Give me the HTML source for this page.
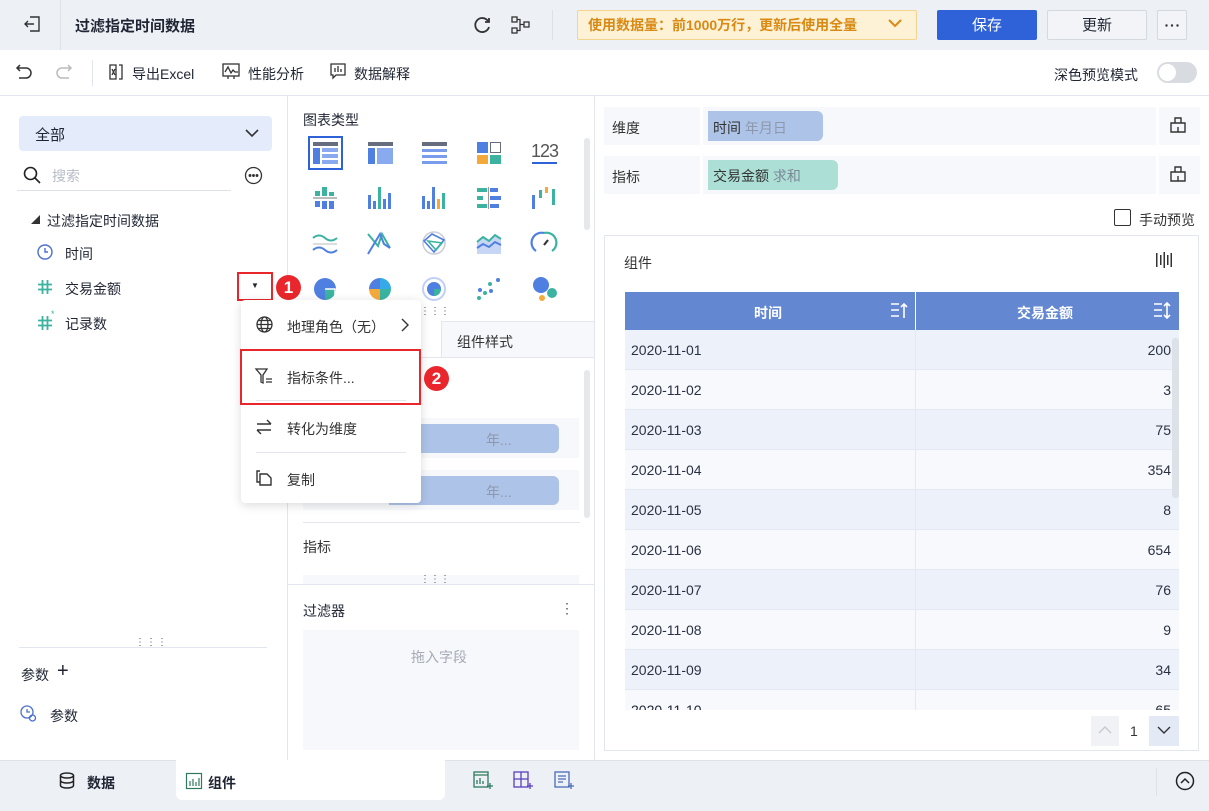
<!DOCTYPE html>
<html><head><meta charset="utf-8"><style>
*{box-sizing:border-box;margin:0;padding:0}
body{width:1209px;height:811px;overflow:hidden;position:relative;background:#fff;font-family:"Liberation Sans","Noto Sans CJK SC",sans-serif;font-size:14px;color:#1f2533}
.a{position:absolute}
.t{position:absolute;white-space:nowrap}
svg{position:absolute;overflow:visible}
.row{position:absolute;left:625px;width:554px;height:40px;border-bottom:1px solid #e4e8f0}
.row span{position:absolute;top:12px;font-size:14px;color:#2a3142}
</style></head><body>
<!-- top bar -->
<div class="a" style="left:0;top:0;width:1209px;height:50px;background:#edf0f5"></div>
<div class="a" style="left:60px;top:0;width:1px;height:50px;background:#dde1e8"></div>
<svg style="left:22px;top:14px" width="20" height="20" viewBox="0 0 20 20" fill="none" stroke="#333" stroke-width="1.4"><path d="M8 3h9v14H8M3 10h9M6 7l-3 3 3 3"/></svg>
<div class="t" style="left:75px;top:15px;font-size:15px;font-weight:bold">过滤指定时间数据</div>
<svg style="left:472px;top:15px" width="20" height="20" viewBox="0 0 20 20" fill="none" stroke="#333" stroke-width="1.8"><path d="M16 6a7 7 0 1 0 1 6"/><path d="M17 3v4h-4"/></svg>
<svg style="left:511px;top:16px" width="20" height="18" viewBox="0 0 20 18" fill="none" stroke="#333" stroke-width="1.3"><rect x="1" y="1" width="5" height="5"/><rect x="1" y="12" width="5" height="5"/><rect x="13" y="6" width="5" height="5"/><path d="M6 3.5h3v11H6M9 8.5h4"/></svg>
<div class="a" style="left:552px;top:10px;width:1px;height:30px;background:#dde1e8"></div>
<div class="a" style="left:577px;top:10px;width:340px;height:30px;background:#fdf1d6;border:1px solid #f5d58e;border-radius:2px"></div>
<div class="t" style="left:588px;top:15px;color:#d98a14;font-size:14px;font-weight:bold">使用数据量：前1000万行，更新后使用全量</div>
<svg style="left:888px;top:18px" width="14" height="10" viewBox="0 0 14 10" fill="none" stroke="#d98a14" stroke-width="2"><path d="M1 2l6 6 6-6"/></svg>
<div class="a" style="left:937px;top:10px;width:100px;height:30px;background:#2f62d8;border-radius:2px"></div>
<div class="t" style="left:972px;top:14px;color:#fff;font-size:15px">保存</div>
<div class="a" style="left:1047px;top:10px;width:100px;height:30px;background:#f2f4f7;border:1px solid #d4d8df;border-radius:2px"></div>
<div class="t" style="left:1082px;top:14px;font-size:15px">更新</div>
<div class="a" style="left:1157px;top:10px;width:30px;height:30px;background:#f2f4f7;border:1px solid #d4d8df;border-radius:2px"></div>
<svg style="left:1165px;top:24px" width="14" height="3" fill="#333"><circle cx="1.5" cy="1.5" r="1.2"/><circle cx="7" cy="1.5" r="1.2"/><circle cx="12.5" cy="1.5" r="1.2"/></svg>
<!-- toolbar -->
<div class="a" style="left:0;top:95px;width:1209px;height:1px;background:#e3e6ec"></div>
<svg style="left:15px;top:63px" width="18" height="16" viewBox="0 0 18 16" fill="none" stroke="#333" stroke-width="1.5"><path d="M5 2L2 5l3 3M2 5h9a5 5 0 0 1 0 10H4"/></svg>
<svg style="left:55px;top:63px" width="18" height="16" viewBox="0 0 18 16" fill="none" stroke="#bbb" stroke-width="1.5"><path d="M13 2l3 3-3 3M16 5H7a5 5 0 0 0 0 10h7"/></svg>
<div class="a" style="left:92px;top:60px;width:1px;height:26px;background:#e3e6ec"></div>
<svg style="left:108px;top:64px" width="16" height="16" viewBox="0 0 16 16" fill="none" stroke="#333" stroke-width="1.3"><path d="M2 1h6v14H2zM11 1h3v14h-3M4 5l3 6M7 5l-3 6"/></svg>
<div class="t" style="left:132px;top:64px">导出Excel</div>
<svg style="left:222px;top:63px" width="18" height="17" viewBox="0 0 18 17" fill="none" stroke="#333" stroke-width="1.3"><rect x="1" y="1" width="16" height="12"/><path d="M3 9l3-5 3 6 2-3 2 2h3M6 13v3M12 13v3"/></svg>
<div class="t" style="left:248px;top:64px">性能分析</div>
<svg style="left:330px;top:63px" width="16" height="17" viewBox="0 0 16 17" fill="none" stroke="#333" stroke-width="1.3"><path d="M1 1h14v11H6l-3 3v-3H1z M5 5v4M8 3v6M11 6v3"/></svg>
<div class="t" style="left:354px;top:64px">数据解释</div>
<div class="t" style="left:1054px;top:65px">深色预览模式</div>
<div class="a" style="left:1157px;top:62px;width:40px;height:21px;background:#d8dbe0;border-radius:11px"></div>
<div class="a" style="left:1159px;top:64px;width:17px;height:17px;background:#fff;border-radius:50%"></div>
<!-- left panel -->
<div class="a" style="left:287px;top:96px;width:1px;height:664px;background:#e3e6ec"></div>
<div class="a" style="left:19px;top:116px;width:253px;height:35px;background:#e4ecfb;border-radius:4px"></div>
<div class="t" style="left:35px;top:124px;font-size:15px">全部</div>
<svg style="left:245px;top:129px" width="14" height="9" viewBox="0 0 14 9" fill="none" stroke="#333" stroke-width="1.6"><path d="M1 1l6 6 6-6"/></svg>
<svg style="left:23px;top:166px" width="18" height="18" viewBox="0 0 18 18" fill="none" stroke="#222" stroke-width="1.6"><circle cx="7.5" cy="7.5" r="6"/><path d="M12 12l5 5"/></svg>
<div class="t" style="left:52px;top:166px;color:#b7bcc6">搜索</div>
<div class="a" style="left:17px;top:190px;width:214px;height:1px;background:#dfe2e8"></div>
<svg style="left:244px;top:166px" width="19" height="19" viewBox="0 0 19 19" fill="none" stroke="#333" stroke-width="1.3"><circle cx="9.5" cy="9.5" r="8"/><circle cx="6" cy="9.5" r=".8" fill="#333"/><circle cx="9.5" cy="9.5" r=".8" fill="#333"/><circle cx="13" cy="9.5" r=".8" fill="#333"/></svg>
<div class="t" style="left:31px;top:213px;font-size:9px;color:#333">◢</div>
<div class="t" style="left:47px;top:211px">过滤指定时间数据</div>
<svg style="left:37px;top:244px" width="16" height="16" viewBox="0 0 16 16" fill="none" stroke="#4d6fd0" stroke-width="1.4"><circle cx="8" cy="8" r="7"/><path d="M8 4v4h3"/></svg>
<div class="t" style="left:65px;top:244px">时间</div>
<svg style="left:38px;top:280px" width="14" height="14" fill="none" stroke="#3cb3a1" stroke-width="1.8"><path d="M4.5 0v14M9.5 0v14M0 4.5h14M0 9.5h14"/></svg>
<div class="t" style="left:65px;top:279px">交易金额</div>
<svg style="left:38px;top:316px" width="14" height="14" fill="none" stroke="#3cb3a1" stroke-width="1.8"><path d="M4.5 0v14M9.5 0v14M0 4.5h14M0 9.5h14"/></svg>
<div class="t" style="left:51px;top:309px;font-size:9px;color:#3cb3a1">*</div>
<div class="t" style="left:65px;top:314px">记录数</div>
<div class="a" style="left:237px;top:272px;width:36px;height:29px;border:2px solid #e8262b"></div>
<div class="t" style="left:251px;top:281px;font-size:8px">▼</div>
<div class="a" style="left:276px;top:275px;width:25px;height:25px;background:#e8262b;border-radius:50%;color:#fff;font-weight:bold;font-size:17px;text-align:center;line-height:25px">1</div>
<div class="t" style="left:135px;top:637px;font-size:10px;color:#555;letter-spacing:1px">⋮⋮⋮</div>
<div class="a" style="left:19px;top:647px;width:248px;height:1px;background:#e3e6ec"></div>
<div class="t" style="left:21px;top:665px">参数</div>
<div class="t" style="left:57px;top:660px;font-size:20px">+</div>
<svg style="left:20px;top:705px" width="18" height="18" viewBox="0 0 18 18" fill="none" stroke="#4d6fd0" stroke-width="1.3"><circle cx="7" cy="7" r="6"/><path d="M7 4v3h3"/><circle cx="12.5" cy="13" r="3"/></svg>
<div class="t" style="left:50px;top:706px">参数</div>
<!-- middle panel -->
<div class="a" style="left:594px;top:96px;width:1px;height:664px;background:#e3e6ec"></div>
<div class="t" style="left:303px;top:110px">图表类型</div>
<div class="a" style="left:584px;top:138px;width:6px;height:92px;background:#e6e8ec;border-radius:3px"></div>
<div class="a" style="left:308px;top:136px;width:35px;height:34px;border:2px solid #2f62d8"></div>
<svg style="left:313px;top:142px" width="25" height="22"><rect x="0" y="0" width="25" height="4" fill="#666d7e"/><rect x="0" y="6" width="7" height="16" fill="#4f7fe0"/><rect x="9" y="6" width="16" height="4" fill="#8aaaf0"/><rect x="9" y="12" width="16" height="4" fill="#8aaaf0"/><rect x="9" y="18" width="16" height="4" fill="#8aaaf0"/></svg>
<svg style="left:368px;top:142px" width="25" height="22"><rect x="0" y="0" width="25" height="4" fill="#666d7e"/><rect x="0" y="6" width="7" height="16" fill="#4f7fe0"/><rect x="9" y="6" width="16" height="16" fill="#8aaaf0"/></svg>
<svg style="left:422px;top:142px" width="25" height="22"><rect x="0" y="0" width="25" height="4" fill="#666d7e"/><rect x="0" y="7" width="25" height="3" fill="#7a9cec"/><rect x="0" y="13" width="25" height="3" fill="#7a9cec"/><rect x="0" y="19" width="25" height="3" fill="#7a9cec"/></svg>
<svg style="left:477px;top:142px" width="24" height="22"><rect x="0" y="0" width="11" height="11" fill="#4f7fe0"/><rect x="13.5" y=".5" width="10" height="10" fill="none" stroke="#666d7e"/><rect x="0" y="13" width="11" height="9" fill="#f4a93b"/><rect x="13" y="13" width="11" height="9" fill="#3cb3a1"/></svg>
<div class="t" style="left:531px;top:141px;font-size:18px;color:#555;letter-spacing:-1px">123</div>
<div class="a" style="left:532px;top:162px;width:25px;height:2px;background:#2f62d8"></div>
<svg style="left:313px;top:187px" width="24" height="22"><rect x="0" y="10" width="24" height="2" fill="#bbb"/><rect x="2" y="4" width="5" height="5" fill="#3cb3a1"/><rect x="9" y="0" width="5" height="9" fill="#3cb3a1"/><rect x="16" y="5" width="5" height="4" fill="#3cb3a1"/><rect x="2" y="14" width="5" height="6" fill="#4f7fe0"/><rect x="9" y="14" width="5" height="8" fill="#4f7fe0"/><rect x="16" y="14" width="5" height="8" fill="#4f7fe0"/></svg>
<svg style="left:368px;top:187px" width="24" height="22"><rect x="0" y="8" width="3" height="14" fill="#4f7fe0"/><rect x="5" y="14" width="3" height="8" fill="#4f7fe0"/><rect x="10" y="0" width="3" height="22" fill="#3cb3a1"/><rect x="15" y="12" width="3" height="10" fill="#4f7fe0"/><rect x="20" y="6" width="3" height="16" fill="#4f7fe0"/></svg>
<svg style="left:422px;top:187px" width="24" height="22"><rect x="0" y="9" width="3" height="13" fill="#4f7fe0"/><rect x="5" y="14" width="3" height="8" fill="#4f7fe0"/><rect x="10" y="0" width="3" height="22" fill="#4f7fe0"/><rect x="15" y="12" width="3" height="10" fill="#f4a93b"/><rect x="20" y="6" width="3" height="16" fill="#3cb3a1"/></svg>
<svg style="left:477px;top:187px" width="24" height="22"><rect x="0" y="1" width="10" height="4" fill="#3cb3a1"/><rect x="13" y="1" width="8" height="4" fill="#4f7fe0"/><rect x="0" y="9" width="6" height="4" fill="#3cb3a1"/><rect x="13" y="9" width="11" height="4" fill="#4f7fe0"/><rect x="0" y="17" width="10" height="4" fill="#3cb3a1"/><rect x="13" y="17" width="9" height="4" fill="#4f7fe0"/><rect x="11" y="0" width="1" height="22" fill="#999"/></svg>
<svg style="left:532px;top:187px" width="24" height="22"><rect x="0" y="8" width="3" height="14" fill="#4f7fe0"/><rect x="7" y="3" width="3" height="8" fill="#3cb3a1"/><rect x="13" y="0" width="3" height="6" fill="#f4a93b"/><rect x="20" y="2" width="3" height="16" fill="#3cb3a1"/></svg>
<svg style="left:313px;top:232px" width="24" height="22" fill="none" stroke-width="2"><path d="M0 6q6-5 12 0t12 0" stroke="#3cb3a1"/><path d="M0 18q6-5 12 0t12 0" stroke="#4f7fe0"/><path d="M0 12h24" stroke="#bbb" stroke-width="1"/></svg>
<svg style="left:368px;top:232px" width="24" height="22" fill="none" stroke-width="2"><path d="M0 2l10 12 4-12 8 14" stroke="#3cb3a1"/><path d="M0 22l6-10 6-10 4 10 6 4" stroke="#4f7fe0"/></svg>
<svg style="left:422px;top:232px" width="24" height="22" fill="none" stroke-width="1.6"><circle cx="12" cy="11" r="11" stroke="#ccd"/><path d="M2 9l8-7 12 6-10 12z" stroke="#4f7fe0"/><path d="M6 9l14 2-6 7z" stroke="#3cb3a1"/></svg>
<svg style="left:477px;top:232px" width="24" height="22"><path d="M0 10l6-5 6 4 6-6 6 4v15H0z" fill="#c8d6f5"/><path d="M0 10l6-5 6 4 6-6 6 4" stroke="#3cb3a1" stroke-width="2" fill="none"/><path d="M0 16l6-4 6 3 6-5 6 3" stroke="#4f7fe0" stroke-width="2" fill="none"/></svg>
<svg style="left:532px;top:232px" width="24" height="22" fill="none" stroke-width="2.2"><path d="M4 19A10 10 0 0 1 12 1" stroke="#4f7fe0"/><path d="M12 1a10 10 0 0 1 8 18" stroke="#3cb3a1"/><path d="M12 13l4-5" stroke="#333"/></svg>
<svg style="left:313px;top:277px" width="24" height="24"><circle cx="12" cy="12" r="11" fill="#4f7fe0"/><path d="M12 12h11a11 11 0 0 1-11 11z" fill="#3cb3a1"/><path d="M12 12h10v9" fill="none" stroke="#fff" stroke-width="1.5"/></svg>
<svg style="left:368px;top:277px" width="24" height="24"><path d="M12 12V1A11 11 0 0 0 1 12z" fill="#4f7fe0"/><path d="M12 12V1a11 11 0 0 1 11 11z" fill="#36a9e8"/><path d="M12 12h11a11 11 0 0 1-11 11z" fill="#3cb3a1"/><path d="M12 12v11A11 11 0 0 1 1 12z" fill="#f4a93b"/></svg>
<svg style="left:422px;top:277px" width="24" height="24"><circle cx="12" cy="12" r="11" fill="none" stroke="#bfcff5" stroke-width="2"/><circle cx="12" cy="12" r="7" fill="#4f7fe0"/><path d="M12 12h7a7 7 0 0 1-7 7z" fill="#3cb3a1"/></svg>
<svg style="left:477px;top:278px" width="24" height="22"><circle cx="2" cy="20" r="2" fill="#3cb3a1"/><circle cx="8" cy="15" r="2" fill="#3cb3a1"/><circle cx="3" cy="12" r="2" fill="#4f7fe0"/><circle cx="14" cy="13" r="2" fill="#4f7fe0"/><circle cx="13" cy="6" r="2" fill="#3cb3a1"/><circle cx="21" cy="2" r="2" fill="#4f7fe0"/></svg>
<svg style="left:532px;top:277px" width="26" height="24"><circle cx="9" cy="8" r="8" fill="#4f7fe0"/><circle cx="20" cy="16" r="5" fill="#3cb3a1"/><circle cx="10" cy="21" r="3" fill="#f4a93b"/></svg>
<div class="t" style="left:420px;top:306px;font-size:10px;color:#555">⋮⋮⋮</div>
<div class="a" style="left:441px;top:321px;width:153px;height:37px;background:#f7f8fb;border:1px solid #e3e6ec;border-right:none"></div>
<div class="t" style="left:457px;top:332px;color:#333">组件样式</div>
<div class="a" style="left:288px;top:357px;width:306px;height:1px;background:#e3e6ec"></div>
<div class="a" style="left:584px;top:370px;width:6px;height:148px;background:#e6e8ec;border-radius:3px"></div>
<div class="a" style="left:303px;top:418px;width:276px;height:40px;background:#f7f8fb"></div>
<div class="a" style="left:389px;top:424px;width:170px;height:29px;background:#adc3e8;border-radius:0 6px 6px 0"></div>
<div class="t" style="left:486px;top:430px;color:#8e98ab">年...</div>
<div class="a" style="left:303px;top:470px;width:276px;height:40px;background:#f7f8fb"></div>
<div class="a" style="left:389px;top:476px;width:170px;height:29px;background:#adc3e8;border-radius:0 6px 6px 0"></div>
<div class="t" style="left:486px;top:482px;color:#8e98ab">年...</div>
<div class="a" style="left:303px;top:522px;width:277px;height:1px;background:#e3e6ec"></div>
<div class="t" style="left:303px;top:537px;color:#333">指标</div>
<div class="a" style="left:303px;top:575px;width:276px;height:9px;background:#f7f8fb"></div>
<div class="a" style="left:288px;top:584px;width:306px;height:1px;background:#e3e6ec"></div>
<div class="t" style="left:420px;top:574px;font-size:10px;color:#555">⋮⋮⋮</div>
<div class="t" style="left:303px;top:601px">过滤器</div>
<div class="t" style="left:560px;top:600px;font-size:14px;color:#555">⋮</div>
<div class="a" style="left:303px;top:630px;width:276px;height:120px;background:#f7f8fb"></div>
<div class="t" style="left:411px;top:647px;color:#a5abb6">拖入字段</div>
<!-- context menu -->
<div class="a" style="left:241px;top:300px;width:180px;height:203px;background:#fff;border-radius:4px;box-shadow:0 2px 10px rgba(0,0,0,.15)"></div>
<svg style="left:256px;top:316px" width="17" height="17" viewBox="0 0 17 17" fill="none" stroke="#333" stroke-width="1.3"><circle cx="8.5" cy="8.5" r="7.5"/><ellipse cx="8.5" cy="8.5" rx="3.5" ry="7.5"/><path d="M1 8.5h15M2.5 4.5h12M2.5 12.5h12"/></svg>
<div class="t" style="left:287px;top:317px;color:#333">地理角色（无）</div>
<svg style="left:401px;top:318px" width="8" height="14" fill="none" stroke="#333" stroke-width="1.4"><path d="M1 1l6 6-6 6"/></svg>
<div class="a" style="left:240px;top:349px;width:181px;height:56px;border:2px solid #e8262b"></div>
<svg style="left:255px;top:368px" width="18" height="16" fill="none" stroke="#333" stroke-width="1.3"><path d="M1 1h11l-4 6v8l-2-1V7z M11 11h6M11 14h6"/></svg>
<div class="t" style="left:287px;top:368px;color:#333">指标条件...</div>
<div class="a" style="left:256px;top:400px;width:150px;height:1px;background:#e3e6ec"></div>
<div class="a" style="left:424px;top:366px;width:25px;height:25px;background:#e8262b;border-radius:50%;color:#fff;font-weight:bold;font-size:17px;text-align:center;line-height:25px">2</div>
<svg style="left:256px;top:419px" width="16" height="16" fill="none" stroke="#333" stroke-width="1.4"><path d="M1 5h14M11 1l4 4M15 11H1M5 15l-4-4"/></svg>
<div class="t" style="left:287px;top:419px;color:#333">转化为维度</div>
<div class="a" style="left:256px;top:452px;width:150px;height:1px;background:#e3e6ec"></div>
<svg style="left:256px;top:470px" width="16" height="16" fill="none" stroke="#333" stroke-width="1.4"><path d="M4 1H1v11h3M4 4h7l4 4v7H4z"/></svg>
<div class="t" style="left:287px;top:470px;color:#333">复制</div>
<!-- right panel -->
<div class="a" style="left:595px;top:96px;width:614px;height:664px;background:#fff"></div>
<div class="a" style="left:604px;top:107px;width:596px;height:38px;background:#f7f8fb"></div>
<div class="a" style="left:700px;top:107px;width:3px;height:38px;background:#fff"></div>
<div class="a" style="left:1156px;top:107px;width:3px;height:38px;background:#fff"></div>
<div class="t" style="left:612px;top:118px;color:#333">维度</div>
<div class="a" style="left:708px;top:111px;width:115px;height:30px;background:#adc3e8;border-radius:0 6px 6px 0"></div>
<div class="t" style="left:713px;top:118px;color:#333">时间 <span style="color:#8e98ab">年月日</span></div>
<div class="a" style="left:604px;top:156px;width:596px;height:38px;background:#f7f8fb"></div>
<div class="a" style="left:700px;top:156px;width:3px;height:38px;background:#fff"></div>
<div class="a" style="left:1156px;top:156px;width:3px;height:38px;background:#fff"></div>
<div class="t" style="left:612px;top:167px;color:#333">指标</div>
<div class="a" style="left:708px;top:160px;width:130px;height:30px;background:#acdfd6;border-radius:0 6px 6px 0"></div>
<div class="t" style="left:713px;top:166px;color:#333">交易金额 <span style="color:#7d8795">求和</span></div>
<svg style="left:1170px;top:117px" width="16" height="16" fill="none" stroke="#333" stroke-width="1.4"><path d="M1 6h14v9H1zM5 6V1h6v5M8 10v5"/></svg>
<svg style="left:1170px;top:166px" width="16" height="16" fill="none" stroke="#333" stroke-width="1.4"><path d="M1 6h14v9H1zM5 6V1h6v5M8 10v5"/></svg>
<div class="a" style="left:1114px;top:209px;width:17px;height:17px;border:1.5px solid #333;border-radius:2px"></div>
<div class="t" style="left:1139px;top:210px;color:#333">手动预览</div>
<div class="a" style="left:604px;top:235px;width:595px;height:516px;border:1px solid #e3e6ec"></div>
<div class="t" style="left:624px;top:253px;color:#333">组件</div>
<svg style="left:1156px;top:252px" width="16" height="16" fill="#333"><rect x="0" y="1" width="1.5" height="14"/><rect x="4" y="3" width="1.5" height="10"/><rect x="7.5" y="0" width="1.5" height="16"/><rect x="11" y="3" width="1.5" height="10"/><rect x="14.5" y="1" width="1.5" height="14"/></svg>
<div class="a" style="left:625px;top:292px;width:554px;height:38px;background:#6388d1"></div>
<div class="a" style="left:915px;top:292px;width:1px;height:38px;background:#fff"></div>
<div class="t" style="left:754px;top:303px;color:#fff;font-weight:bold">时间</div>
<div class="t" style="left:1017px;top:303px;color:#fff;font-weight:bold">交易金额</div>
<svg style="left:890px;top:302px" width="18" height="17" fill="none" stroke="#fff" stroke-width="1.6"><path d="M1 2h8M1 8h8M1 14h8M14 16V2M11 5l3-3 3 3"/></svg>
<svg style="left:1153px;top:302px" width="18" height="17" fill="none" stroke="#fff" stroke-width="1.6"><path d="M1 2h8M1 8h8M1 14h8M14 1v15M11 4l3-3 3 3M11 13l3 3 3-3"/></svg>
<div class="row" style="top:330px;background:#edf1f9"><span style="left:6px">2020-11-01</span><span style="right:8px">200</span></div>
<div class="row" style="top:370px;background:#f7f9fc"><span style="left:6px">2020-11-02</span><span style="right:8px">3</span></div>
<div class="row" style="top:410px;background:#edf1f9"><span style="left:6px">2020-11-03</span><span style="right:8px">75</span></div>
<div class="row" style="top:450px;background:#f7f9fc"><span style="left:6px">2020-11-04</span><span style="right:8px">354</span></div>
<div class="row" style="top:490px;background:#edf1f9"><span style="left:6px">2020-11-05</span><span style="right:8px">8</span></div>
<div class="row" style="top:530px;background:#f7f9fc"><span style="left:6px">2020-11-06</span><span style="right:8px">654</span></div>
<div class="row" style="top:570px;background:#edf1f9"><span style="left:6px">2020-11-07</span><span style="right:8px">76</span></div>
<div class="row" style="top:610px;background:#f7f9fc"><span style="left:6px">2020-11-08</span><span style="right:8px">9</span></div>
<div class="row" style="top:650px;background:#edf1f9"><span style="left:6px">2020-11-09</span><span style="right:8px">34</span></div>
<div class="a" style="left:625px;top:690px;width:554px;height:20px;overflow:hidden;background:#f7f9fc"><span class="t" style="left:6px;top:12px">2020-11-10</span><span class="t" style="right:8px;top:12px">65</span></div>
<div class="a" style="left:915px;top:330px;width:1px;height:380px;background:#e4e8f0"></div>
<div class="a" style="left:1172px;top:338px;width:7px;height:160px;background:#dde1e8;border-radius:3px"></div>
<div class="a" style="left:1091px;top:716px;width:28px;height:30px;background:#f0f2f6"></div>
<svg style="left:1098px;top:726px" width="14" height="8" fill="none" stroke="#c5c9d0" stroke-width="1.4"><path d="M1 7l6-6 6 6"/></svg>
<div class="t" style="left:1130px;top:723px;color:#333">1</div>
<div class="a" style="left:1149px;top:716px;width:30px;height:30px;background:#e4eaf5"></div>
<svg style="left:1157px;top:726px" width="14" height="8" fill="none" stroke="#333" stroke-width="1.4"><path d="M1 1l6 6 6-6"/></svg>
<!-- bottom bar -->
<div class="a" style="left:0;top:760px;width:1209px;height:51px;background:#edf0f5;border-top:1px solid #dde1e8"></div>
<div class="a" style="left:176px;top:760px;width:269px;height:40px;background:#fff;border-radius:0 0 6px 6px"></div>
<svg style="left:59px;top:772px" width="16" height="17" fill="none" stroke="#222" stroke-width="1.5"><ellipse cx="8" cy="3.5" rx="6.5" ry="2.5"/><path d="M1.5 3.5v10c0 1.4 3 2.5 6.5 2.5s6.5-1.1 6.5-2.5v-10M1.5 8.5c0 1.4 3 2.5 6.5 2.5s6.5-1.1 6.5-2.5"/></svg>
<div class="t" style="left:87px;top:773px;font-weight:bold">数据</div>
<svg style="left:186px;top:773px" width="16" height="16" fill="none" stroke="#2e7a5e" stroke-width="1.2"><rect x=".5" y=".5" width="15" height="15"/><path d="M4 13V8M7 13V6M10 13V9M13 13V5"/></svg>
<div class="t" style="left:208px;top:773px;font-weight:bold">组件</div>
<svg style="left:473px;top:771px" width="20" height="20" fill="none" stroke="#2e7a5e" stroke-width="1.3"><rect x="1" y="1" width="14" height="15"/><path d="M1 4h14M4 13V9M7 13V7M10 13V10M14 15h6M17 12v6"/></svg>
<svg style="left:513px;top:771px" width="20" height="20" fill="none" stroke="#5a3fc0" stroke-width="1.3"><rect x="1" y="1" width="14" height="15"/><path d="M1 8h14M8 1v15M14 15h6M17 12v6"/></svg>
<svg style="left:554px;top:771px" width="20" height="20" fill="none" stroke="#4a6bb8" stroke-width="1.3"><rect x="1" y="1" width="14" height="15"/><path d="M4 5h8M4 8h8M4 11h5M14 15h6M17 12v6"/></svg>
<div class="a" style="left:1156px;top:768px;width:1px;height:28px;background:#dde1e8"></div>
<svg style="left:1175px;top:771px" width="20" height="20" fill="none" stroke="#222" stroke-width="1.5"><circle cx="10" cy="10" r="8.5"/><path d="M6 12l4-4 4 4"/></svg>
</body></html>
